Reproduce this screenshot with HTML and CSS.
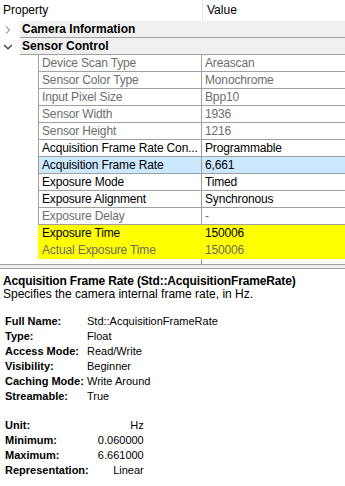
FILE: index.html
```html
<!DOCTYPE html>
<html lang="en">

<head>
    <meta charset="UTF-8">
    <title>Feature Properties</title>
    <link rel="stylesheet" href="styles.css">
</head>

<body>
    <div class="grid">
        <div class="head">
            <div class="hname">Property</div>
            <div class="hval">Value</div>
        </div>

        <div class="cat">
            <span class="exp">
                <svg width="8" height="10" viewBox="0 0 8 10"><path d="M2 1.5 L5.5 5 L2 8.5" fill="none" stroke="#a6a6a6" stroke-width="1.2"/></svg>
            </span>
            <span class="cat-label">Camera Information</span>
        </div>
        <div class="cat">
            <span class="exp">
                <svg width="10" height="8" viewBox="0 0 10 8"><path d="M1 2 L5 5.8 L9 2" fill="none" stroke="#404040" stroke-width="1.2"/></svg>
            </span>
            <span class="cat-label">Sensor Control</span>
        </div>

        <div class="row off"><div class="name">Device Scan Type</div><div class="val">Areascan</div></div>
        <div class="row off"><div class="name">Sensor Color Type</div><div class="val">Monochrome</div></div>
        <div class="row off"><div class="name">Input Pixel Size</div><div class="val">Bpp10</div></div>
        <div class="row off"><div class="name">Sensor Width</div><div class="val">1936</div></div>
        <div class="row off"><div class="name">Sensor Height</div><div class="val">1216</div></div>
        <div class="row"><div class="name">Acquisition Frame Rate Con...</div><div class="val">Programmable</div></div>
        <div class="row selected"><div class="name">Acquisition Frame Rate</div><div class="val">6,661</div></div>
        <div class="row"><div class="name">Exposure Mode</div><div class="val">Timed</div></div>
        <div class="row"><div class="name">Exposure Alignment</div><div class="val">Synchronous</div></div>
        <div class="row off"><div class="name">Exposure Delay</div><div class="val">-</div></div>
        <div class="row mark"><div class="name">Exposure Time</div><div class="val">150006</div></div>
        <div class="row mark off"><div class="name">Actual Exposure Time</div><div class="val">150006</div></div>
        <div class="row tail"><div class="name"></div><div class="val"></div></div>
    </div>

    <div class="splitter"></div>

    <div class="desc">
        <div class="desc-title">Acquisition Frame Rate (Std::AcquisitionFrameRate)</div>
        <div class="desc-text">Specifies the camera internal frame rate, in Hz.</div>

        <table class="info">
            <tr><th>Full Name:</th><td>Std::AcquisitionFrameRate</td></tr>
            <tr><th>Type:</th><td>Float</td></tr>
            <tr><th>Access Mode:</th><td>Read/Write</td></tr>
            <tr><th>Visibility:</th><td>Beginner</td></tr>
            <tr><th>Caching Mode:</th><td>Write Around</td></tr>
            <tr><th>Streamable:</th><td>True</td></tr>
        </table>

        <table class="info nums">
            <tr><th>Unit:</th><td>Hz</td></tr>
            <tr><th>Minimum:</th><td>0.060000</td></tr>
            <tr><th>Maximum:</th><td>6.661000</td></tr>
            <tr><th>Representation:</th><td>Linear</td></tr>
        </table>
    </div>
</body>

</html>
```

FILE: styles.css
```css
body {
    margin: 0;
    width: 345px;
    height: 486px;
    overflow: hidden;
    background: white;
    font-family: "Liberation Sans", Arial, sans-serif;
    font-size: 12px;
    color: black;
}

.grid {
    height: 264px;
    overflow: hidden;
}

.head {
    display: flex;
    height: 21px;
    line-height: 21px;
}

.hname {
    width: 199px;
    padding-left: 3px;
    border-right: 1px solid #e5e5e5;
}

.hval {
    padding-left: 4px;
}

.cat {
    display: flex;
    height: 17px;
}

.exp {
    width: 20px;
    display: flex;
    align-items: center;
    justify-content: center;
    padding-right: 4px;
    box-sizing: border-box;
}

.cat-label {
    flex: 1;
    background-color: #f0f0f0;
    border-bottom: 1px solid #a0a0a0;
    padding-left: 2px;
    font-weight: bold;
    line-height: 17px;
}

.row {
    display: flex;
    height: 17px;
    padding-left: 38px;
    letter-spacing: -0.15px;
}

.row .name,
.row .val {
    border-bottom: 1px solid #a0a0a0;
    line-height: 17px;
    white-space: nowrap;
    overflow: hidden;
}

.row .name {
    width: 159px;
    padding-left: 3px;
    border-left: 1px solid #a0a0a0;
    border-right: 1px solid #a0a0a0;
}

.row .val {
    flex: 1;
    padding-left: 3px;
}

.off {
    color: #6d6d6d;
}

.selected .name,
.selected .val {
    background-color: #cce8ff;
}

.mark .name,
.mark .val {
    background-color: #ffff00;
    border-color: #ffff00;
}

.tail .name,
.tail .val {
    border-bottom: none;
}

.tail .name {
    border-left-color: white;
}

.splitter {
    height: 3px;
    background-color: #f0f0f0;
    border-top: 1px solid #a0a0a0;
    border-bottom: 1px solid #a0a0a0;
}

.desc {
    padding: 5px 3px 0;
}

.desc-title {
    font-weight: bold;
    line-height: 14px;
    letter-spacing: -0.15px;
}

.desc-text {
    line-height: 13px;
}

.info {
    border-collapse: collapse;
    margin: 12px 0 0 2px;
    font-size: 11px;
}

.nums {
    margin-top: 14px;
}

.info th,
.info td {
    padding: 0;
    height: 15px;
    text-align: left;
    white-space: nowrap;
}

.info th {
    width: 82px;
}

.nums td {
    width: 55px;
    text-align: right;
}
```
